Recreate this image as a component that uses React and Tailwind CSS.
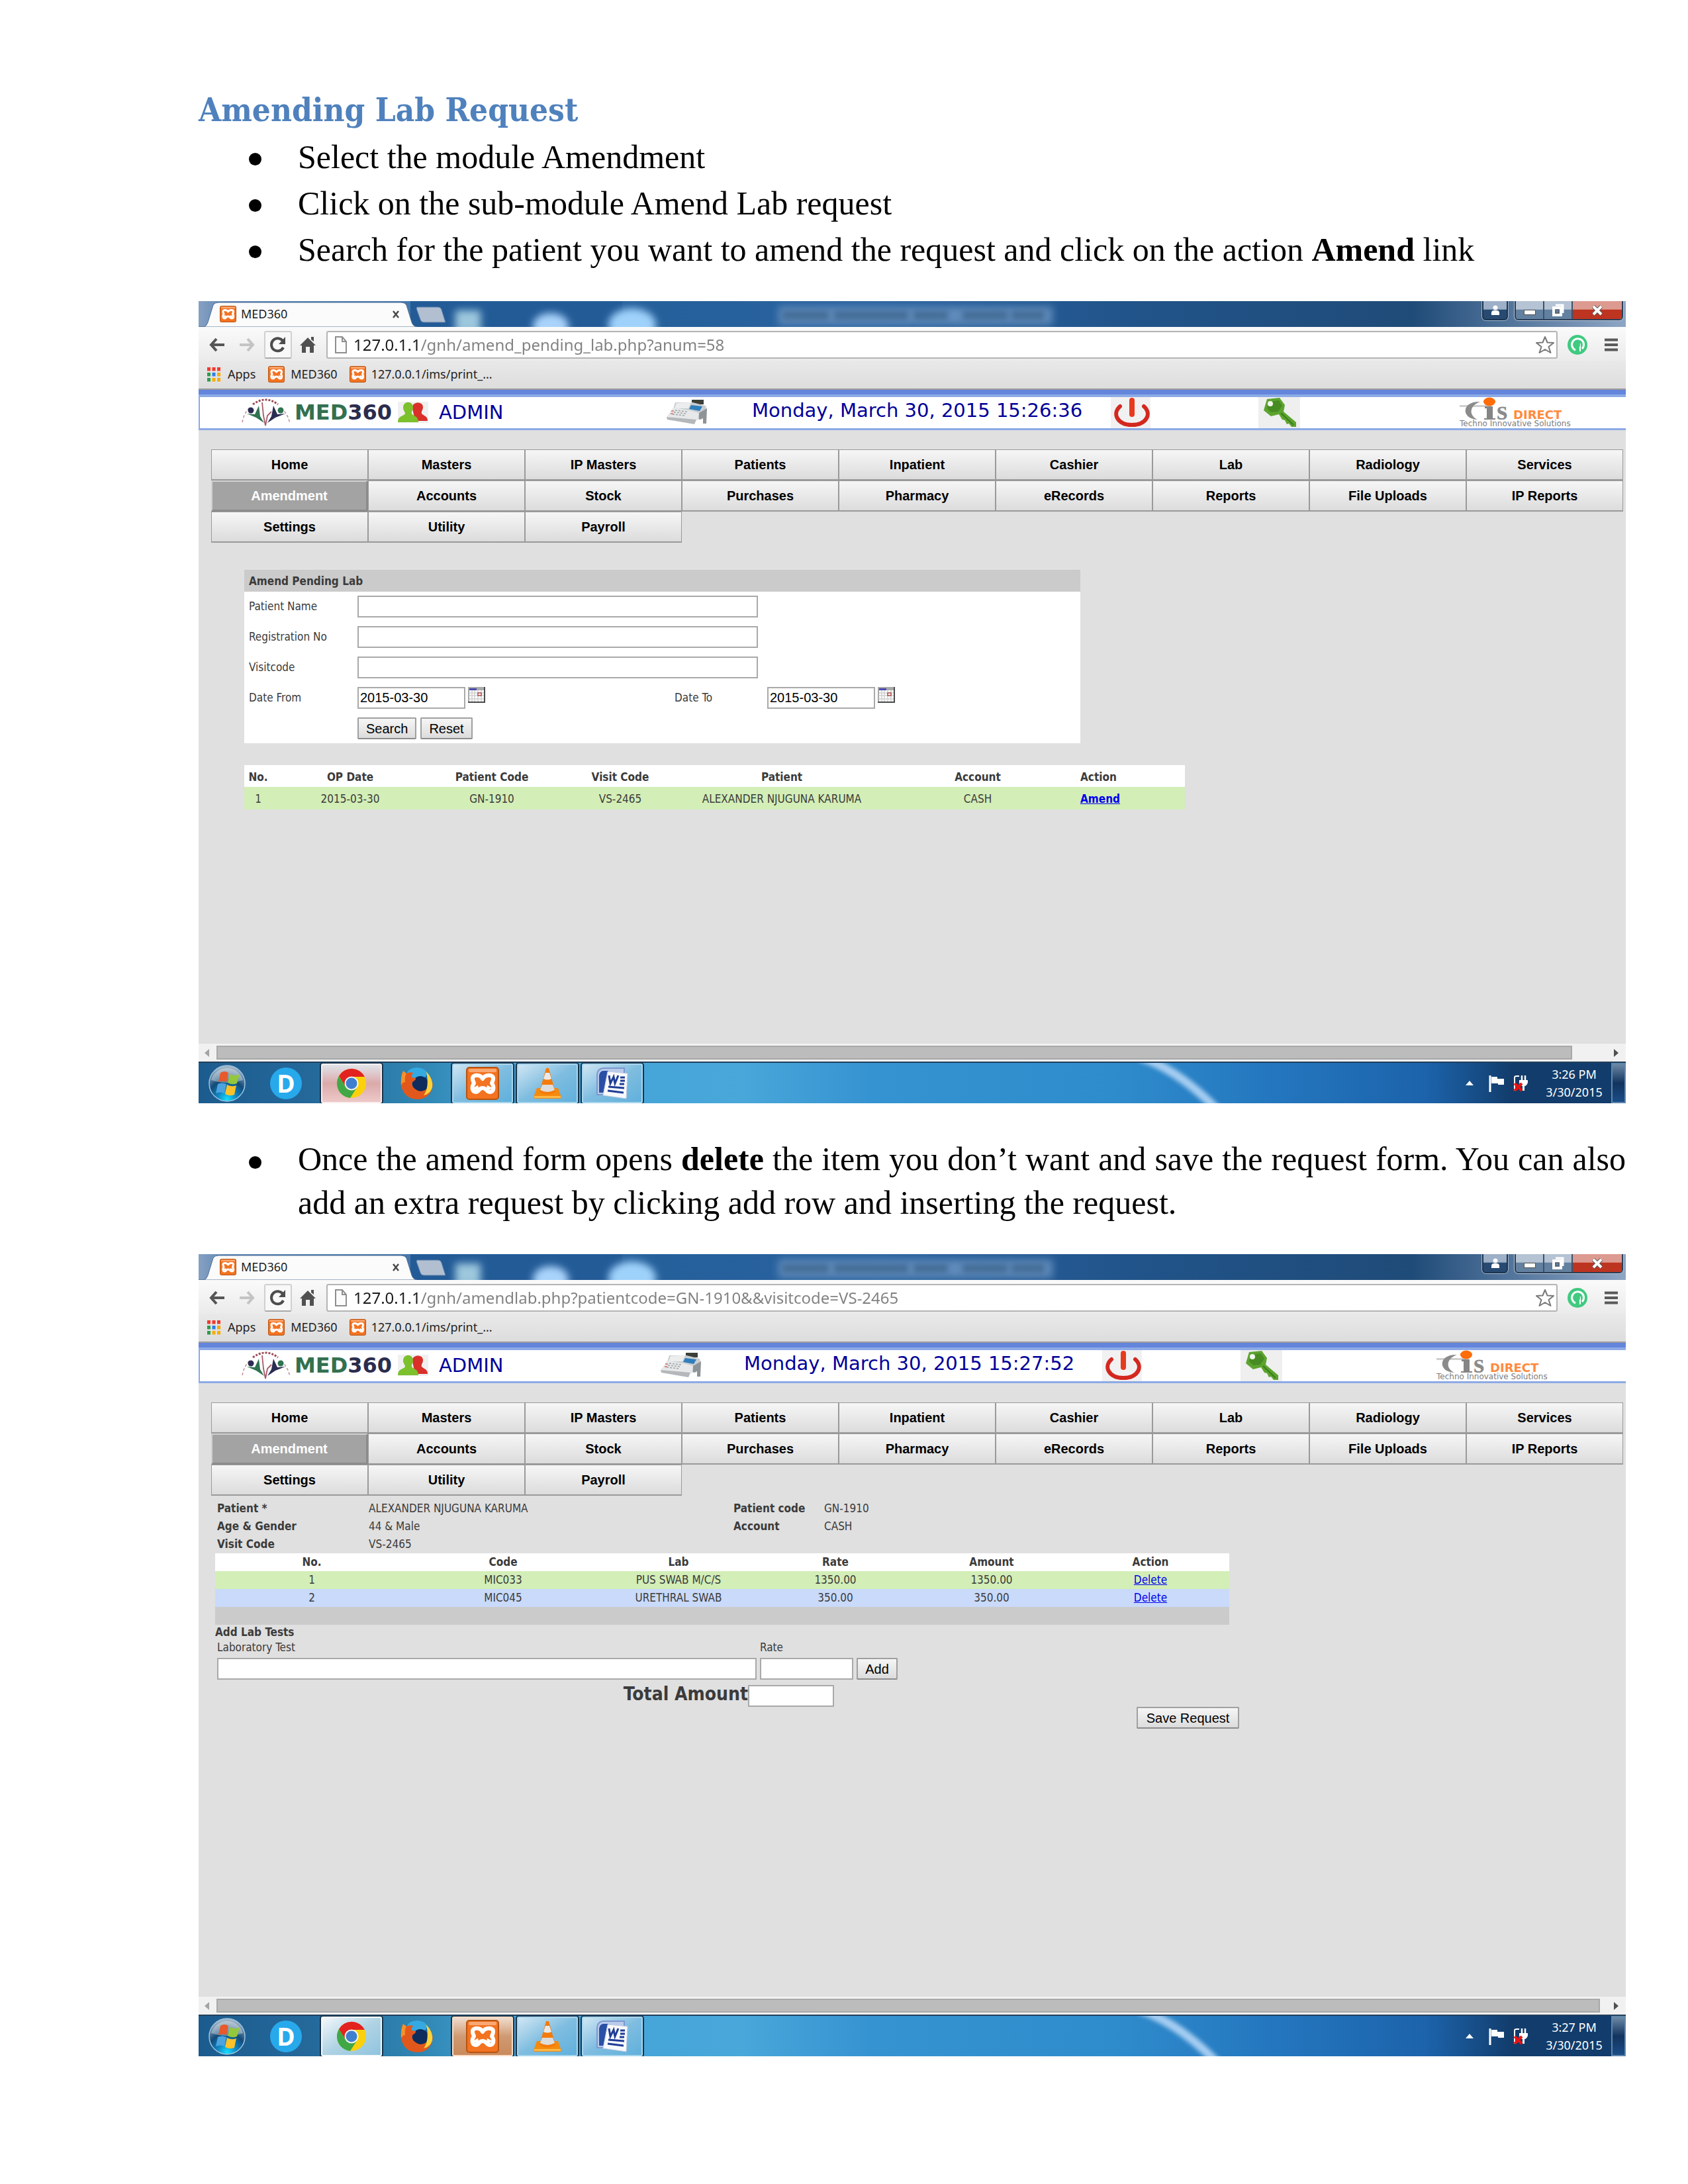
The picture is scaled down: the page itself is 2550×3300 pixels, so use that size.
import React from 'react';

const TAHOMA = "font-['DejaVu_Sans_Condensed','Noto_Sans',sans-serif]";
const SEGOE = "font-['Noto_Sans',sans-serif]";
const ARIAL = "font-['Liberation_Sans',Arial,sans-serif]";
const VERDANA = "font-['DejaVu_Sans',Verdana,sans-serif]";
const FIELD = 'border-2 border-[#a9a9a9] bg-white text-black text-[20px] px-[2px] h-[33px] rounded-none';
const BUTTON =
  'h-[33px] border-2 border-[#a0a0a0] border-b-[#8c8c8c] rounded-[2px] bg-linear-to-b from-[#f6f6f6] to-[#dcdcdc] text-black text-[20px] leading-none px-[11px]';

/* ---------- icons ---------- */

function XamppIcon({ className }) {
  return (
    <svg viewBox="0 0 50 50" className={className} aria-hidden="true">
      <rect x="1" y="1" width="48" height="48" rx="4" fill="#f37321" stroke="#b9530f" strokeWidth="2" />
      <rect x="4" y="3" width="42" height="5" rx="2" fill="#f9a873" />
      <path
        d="M25 18 C22 11 9 11 10 18 C10 22 12 23 12 25 C8 30 9 38 15 38 C20 38 19 32 25 32 C31 32 31 38 36 38 C42 38 43 30 39 25 C39 23 41 22 41 18 C42 11 29 11 25 18 Z"
        fill="none"
        stroke="#fff"
        strokeWidth="6"
        strokeLinejoin="round"
      />
      <path d="M13 32 L17 30 L18 35 Z M37 32 L33 30 L32 35 Z" fill="#fff" stroke="#fff" strokeWidth="3" />
    </svg>
  );
}

function AppsIcon() {
  const colors = ['#f03a2e', '#f03a2e', '#f03a2e', '#2c9c4b', '#2f7de9', '#f5ac08', '#2c9c4b', '#f5ac08', '#f5ac08'];
  return (
    <svg viewBox="0 0 20 22" className="h-[22px] w-[20px]" aria-hidden="true">
      {colors.map((c, i) => (
        <rect key={i} x={(i % 3) * 7.5} y={Math.floor(i / 3) * 8} width="5" height="5.5" fill={c} />
      ))}
    </svg>
  );
}

function MedMark() {
  return (
    <svg viewBox="0 0 74 42" className="h-[42px] w-[74px]" aria-hidden="true">
      <path d="M17 9 Q36 -5 55 9" fill="none" stroke="#9a4a54" strokeWidth="3" strokeDasharray="3 2" />
      <path d="M12 14 Q2 24 1 38 M60 14 Q70 24 73 38" fill="none" stroke="#c08a90" strokeWidth="1.5" strokeDasharray="4 3" />
      <circle cx="14" cy="18" r="4.5" fill="#2b2c52" />
      <circle cx="59" cy="18" r="4.5" fill="#2f7350" />
      <path d="M8 23 L20 24 L26 11 L28 27 L34 37 L22 29 Z" fill="#2f7350" />
      <path d="M66 23 L54 24 L48 11 L45 27 L39 37 L51 29 Z" fill="#2b2c52" />
      <path d="M31 6 L33 26 L36 41 L39 26 L45 20" fill="none" stroke="#a85a68" strokeWidth="1.8" />
    </svg>
  );
}

function PeopleIcon() {
  return (
    <svg viewBox="0 0 46 32" className="h-[32px] w-[46px]" aria-hidden="true">
      <rect width="46" height="32" fill="#f0f0f0" />
      <path d="M22 10 C20 0 38 -2 38 8 C38 13 35 14 36 18 C38 21 45 21 45 29 L26 29 Z" fill="#d9302a" />
      <path d="M8 9 C8 -2 23 -2 23 9 C23 13 20 15 21 18 C23 22 31 21 31 31 L0 31 C0 21 9 22 11 18 C11 15 8 13 8 9 Z" fill="#7cc02c" />
    </svg>
  );
}

function RegisterIcon() {
  return (
    <svg viewBox="0 0 64 38" className="h-[38px] w-[64px]" aria-hidden="true">
      <rect x="39" y="0" width="18" height="7" fill="#3b3f38" />
      <path d="M14 4 L40 4 L60 9 L62 16 L54 30 L8 24 Z" fill="#c9cdd0" />
      <path d="M16 5 L38 4 L34 13 L13 13 Z" fill="#eceeee" />
      <path d="M38 8 L55 10 L51 17 L35 14 Z" fill="#2f7fbd" />
      <path d="M11 12 L36 16 L50 20 L48 31 L1 26 Z" fill="#e6e8e9" />
      <path d="M1 26 L46 30 L43 37 L2 30 Z" fill="#b4b8ba" />
      <path d="M50 20 L62 13 L61 36 L56 36 L56 28 L50 30 Z" fill="#8d9397" />
      <path d="M14 16 L32 18 M12 19 L31 21 M10 22 L29 24" stroke="#9fa4a8" strokeWidth="1.5" strokeDasharray="3 2" />
      <path d="M8 17 L12 17 M7 21 L11 21" stroke="#d98b86" strokeWidth="2" />
    </svg>
  );
}

function PowerIcon() {
  return (
    <svg viewBox="0 0 60 47" className="h-[47px] w-[60px]" aria-hidden="true">
      <rect width="60" height="47" fill="#f1f1f1" />
      <path d="M14 14 C2 24 9 42 32 42 C55 42 62 24 50 14" fill="none" stroke="#d3281f" strokeWidth="6" strokeLinecap="round" />
      <path d="M32 5 V26" stroke="#e63b1f" strokeWidth="8" strokeLinecap="round" />
    </svg>
  );
}

function KeyIcon() {
  return (
    <svg viewBox="0 0 63 47" className="h-[47px] w-[63px]" aria-hidden="true">
      <rect width="63" height="47" fill="#efefef" />
      <path d="M13 3 L32 1 L40 12 L38 22 L57 38 L57 45 L50 45 L46 40 L43 41 L40 35 L36 34 L31 26 L19 29 L8 20 Z" fill="#5da42f" />
      <path d="M16 7 L31 5 L36 13 L30 22 L19 23 L13 17 Z" fill="#468c22" />
      <ellipse cx="18" cy="10" rx="4" ry="4" fill="#f2f7ee" />
      <path d="M34 24 L53 42" stroke="#3b7d1b" strokeWidth="2" />
    </svg>
  );
}

function CisLogo() {
  return (
    <svg viewBox="0 0 174 46" className="h-[46px] w-[174px] overflow-visible" role="img" aria-label="CIS Direct, Techno Innovative Solutions">
      <rect x="0" y="12" width="48" height="3" fill="#cfcfcf" />
      <path d="M31 7 C2 6 2 33 27 34 C14 28 14 13 31 7 Z" fill="#8b8b8b" />
      <path d="M38 14 H50 V32 H54 V34 H37 V32 H41 V17 H38 Z" fill="#858585" />
      <ellipse cx="45" cy="7" rx="9" ry="6.5" fill="#ff6d0a" />
      <text x="56" y="34" fontFamily="Liberation Serif, serif" fontWeight="700" fontSize="42" fill="#8b8b8b">s</text>
      <text x="81" y="33" fontFamily="DejaVu Sans, sans-serif" fontWeight="700" fontSize="18" fill="#ff8a3d">DIRECT</text>
      <text x="0" y="44" fontFamily="DejaVu Sans, sans-serif" fontSize="12" fill="#7d7d7d">Techno Innovative Solutions</text>
    </svg>
  );
}

function CalendarIcon() {
  return (
    <svg viewBox="0 0 26 24" className="h-[24px] w-[26px]" aria-hidden="true">
      <rect width="26" height="24" fill="#4a4a4a" />
      <rect width="24" height="22" fill="#a9a9a9" />
      <rect x="2" y="5" width="22" height="17" fill="#fff" />
      <rect x="2" y="2" width="11" height="3" fill="#4b4bb0" />
      <path d="M2 9 H24 M2 13 H24 M2 18 H24 M6 5 V22 M10 5 V22 M15 5 V22 M20 5 V22" stroke="#d0d0d0" strokeWidth="1.5" />
      <rect x="15" y="9" width="5" height="4" fill="#fff" stroke="#b04a4a" strokeWidth="1.5" />
    </svg>
  );
}

function StartOrb() {
  return (
    <svg viewBox="0 0 58 58" className="h-[58px] w-[58px]" aria-hidden="true">
      <defs>
        <radialGradient id="orb" cx="50%" cy="95%" r="90%">
          <stop offset="0" stopColor="#16e0ff" />
          <stop offset="0.3" stopColor="#1086c4" />
          <stop offset="0.6" stopColor="#134a78" />
          <stop offset="1" stopColor="#9fb4c6" />
        </radialGradient>
      </defs>
      <circle cx="29" cy="29" r="27" fill="url(#orb)" stroke="#9dc4dc" strokeWidth="1.5" />
      <path d="M5 24 A25 25 0 0 1 53 24 Q29 32 5 24 Z" fill="#fff" opacity="0.35" />
      <path d="M19 13 Q25 9 31 13 L28 27 Q22 24 16 27 Z" fill="#e8592b" />
      <path d="M33 15 Q40 19 48 15 L44 29 Q37 32 30 28 Z" fill="#93c83d" />
      <path d="M15 30 Q21 27 28 30 L25 44 Q19 41 12 44 Z" fill="#4ba4e0" />
      <path d="M29 31 Q36 35 43 32 L40 46 Q33 49 26 45 Z" fill="#fdc229" />
    </svg>
  );
}

function DIcon() {
  return (
    <span className="flex h-[48px] w-[48px] items-center justify-center rounded-full bg-[#27a9ec] text-[37px] font-bold leading-none text-white font-['Open_Sans',sans-serif]">
      D
    </span>
  );
}

function ChromeIcon() {
  return (
    <svg viewBox="0 0 46 46" className="h-[46px] w-[46px]" aria-hidden="true">
      <circle cx="23" cy="23" r="22" fill="#fbd10b" />
      <path d="M4 12 A22 22 0 0 1 43 13 L23 13 L14 28 Z" fill="#e2231f" />
      <path d="M4 12 A22 22 0 0 0 21 45 L32 28 L14 28 Z" fill="#3fa845" />
      <circle cx="23" cy="23" r="10.5" fill="#f3f5f2" />
      <circle cx="23" cy="23" r="8.5" fill="#3e7fd0" />
    </svg>
  );
}

function FirefoxIcon() {
  return (
    <svg viewBox="0 0 50 48" className="h-[48px] w-[50px]" aria-hidden="true">
      <circle cx="26" cy="20" r="19" fill="#1667b0" />
      <ellipse cx="25" cy="9" rx="15" ry="9" fill="#35a9e2" />
      <circle cx="30" cy="25" r="12" fill="#0e2c5c" />
      <path d="M4 5 L9 9 Q14 6 19 8 Q16 12 17 15 L23 16 Q24 19 18 22 Q16 29 23 33 Q30 39 39 33 Q44 26 40 9 Q51 20 48 31 Q43 48 25 48 Q5 47 1 27 Q0 14 4 5 Z" fill="#e2581c" />
      <path d="M39 6 Q50 18 48 30 Q45 40 35 42 Q44 30 39 6 Z" fill="#fbd33a" />
      <path d="M4 5 L9 9 Q6 14 7 22 Q3 22 1 27 Q0 14 4 5 Z" fill="#f4912b" />
    </svg>
  );
}

function VlcIcon() {
  return (
    <svg viewBox="0 0 44 48" className="h-[48px] w-[44px]" aria-hidden="true">
      <path d="M6 31 H38 L43 45 Q43 47 41 47 H3 Q1 47 1 45 Z" fill="#f58a0c" />
      <path d="M2 43 H42 V46 H2 Z" fill="#fdb94a" />
      <path d="M20 1 H24 L34 37 Q22 44 10 37 Z" fill="#f47b0a" />
      <path d="M19 8 H25 L28 17 Q22 20 16 17 Z" fill="#e9e9e9" />
      <path d="M14 26 H30 L33 34 Q22 40 11 34 Z" fill="#dcdcdc" />
    </svg>
  );
}

function WordIcon() {
  return (
    <svg viewBox="0 0 48 48" className="h-[48px] w-[48px]" aria-hidden="true">
      <path d="M10 1 H42 V41 H1 V10 Q2 2 10 1 Z" fill="#b9cbea" stroke="#7e97cf" strokeWidth="2" />
      <path d="M10 5 H18 V38 H4 V12 Q5 6 10 5 Z" fill="#2a4fa6" />
      <path d="M17 6 L47 9 L45 47 L10 42 Z" fill="#f8f9fc" stroke="#c3cde0" />
      <path d="M19 12 L21 24 L26 14 L28 24 L33 12" fill="none" stroke="#1f3d96" strokeWidth="3" />
      <path d="M36 15 H43 M36 20 H43 M35 25 H42 M18 29 L42 31 M17 35 L41 38" stroke="#1f3d96" strokeWidth="3" />
    </svg>
  );
}

/* ---------- browser chrome ---------- */

function TitleBar() {
  return (
    <div className="relative flex h-[39px] shrink-0 items-stretch overflow-hidden bg-[linear-gradient(to_right,#86a0c2_0%,#5f86b4_2%,#25609b_32%,#2a629f_48%,#21548a_65%,#1f4b78_85%,#7893b5_97%,#8ea6c4_100%)]">
      <svg viewBox="0 0 1300 39" className="absolute left-0 top-0 h-[39px] w-[1300px]" aria-hidden="true">
        <defs>
          <filter id="soft" x="-10%" y="-100%" width="120%" height="300%"><feGaussianBlur stdDeviation="6" /></filter>
          <filter id="softer" x="-10%" y="-100%" width="120%" height="300%"><feGaussianBlur stdDeviation="4" /></filter>
        </defs>
        <rect x="320" y="0" width="320" height="39" fill="#235b97" />
        <g filter="url(#soft)">
          <rect x="388" y="14" width="38" height="34" fill="#9cc7dd" />
          <ellipse cx="532" cy="38" rx="27" ry="20" fill="#a9d3fb" />
          <ellipse cx="655" cy="36" rx="36" ry="25" fill="#9fd2fb" />
          <rect x="876" y="8" width="414" height="28" fill="#5f8aba" />
        </g>
        <g filter="url(#softer)" fill="#33597f" opacity="0.6">
          <rect x="882" y="15" width="70" height="13" />
          <rect x="960" y="15" width="112" height="13" />
          <rect x="1080" y="15" width="52" height="13" />
          <rect x="1154" y="15" width="68" height="13" />
          <rect x="1228" y="15" width="50" height="13" />
        </g>
        <path d="M0 39 H8 Q12 38 14 32 L22 6 Q24 2 30 2 H306 Q312 2 314 6 L322 32 Q324 38 330 39 Z" fill="#fbfbfb" stroke="#4d6f97" strokeWidth="1" />
        <path d="M330 9 H362 Q366 9 367 13 L373 32 H340 Q336 32 335 28 L329 11 Z" fill="#b1bfd1" stroke="#5c80a8" />
      </svg>
      <div className={`relative ml-[32px] flex w-[280px] items-center gap-[7px] text-[18px] text-[#1d1d1d] ${SEGOE}`}>
        <XamppIcon className="h-[25px] w-[25px]" />
        <span>MED360</span>
        <button type="button" aria-label="Close tab" className="ml-auto mr-[8px] text-[#4a4a4a]">
          <svg viewBox="0 0 12 12" className="h-[12px] w-[12px]"><path d="M2 1 L10 11 M10 1 L2 11" stroke="currentColor" strokeWidth="2.5" /></svg>
        </button>
      </div>
      <div className="relative ml-auto mr-[4px] flex h-[29px] gap-[10px]">
        <button type="button" aria-label="User" className="flex w-[39px] items-center justify-center rounded-b-[6px] border-2 border-t-0 border-[#1c3550] bg-linear-to-b from-[#9db0c7] from-45% to-[#284a70] to-50% shadow-[0_0_0_1px_#9fb4cc]">
          <svg viewBox="0 0 14 16" className="h-[16px] w-[14px]"><circle cx="7" cy="4" r="3.5" fill="#fff" /><path d="M1 15 V12 Q1 8 5 8 H9 Q13 8 13 12 V15 Z" fill="#fff" /></svg>
        </button>
        <div className="flex overflow-hidden rounded-b-[6px] border-2 border-t-0 border-[#2a3f58] shadow-[0_0_0_1px_#b6c4d6]">
          <button type="button" aria-label="Minimize" className="flex w-[43px] items-end justify-center border-r-2 border-[#3b536f] bg-linear-to-b from-[#b5c3d4] from-45% to-[#62809f] to-50% pb-[6px]">
            <span className="h-[8px] w-[18px] border border-[#555] bg-white" />
          </button>
          <button type="button" aria-label="Restore" className="flex w-[43px] items-center justify-center border-r-2 border-[#3b536f] bg-linear-to-b from-[#b5c3d4] from-45% to-[#62809f] to-50%">
            <svg viewBox="0 0 20 20" className="h-[20px] w-[20px]" fill="none"><path d="M6 2 H17 V14" stroke="#fff" strokeWidth="3" /><rect x="3" y="6" width="11" height="11" stroke="#fff" strokeWidth="4" /><rect x="6" y="9" width="5" height="5" stroke="#555" /></svg>
          </button>
          <button type="button" aria-label="Close" className="flex w-[74px] items-center justify-center bg-linear-to-b from-[#dd9a90] from-45% to-[#bd3420] to-50%">
            <svg viewBox="0 0 18 16" className="h-[16px] w-[18px]"><path d="M3 2 L15 14 M15 2 L3 14" stroke="#555" strokeWidth="6" /><path d="M3 2 L15 14 M15 2 L3 14" stroke="#fff" strokeWidth="4" /></svg>
          </button>
        </div>
      </div>
    </div>
  );
}

function Toolbar({ url }) {
  return (
    <div className="flex h-[51px] shrink-0 items-center bg-linear-to-b from-[#fafafa] to-[#ebebeb] pl-[16px] pr-[12px] pt-[2px] text-[#4a4a4a]">
      <button type="button" aria-label="Back">
        <svg viewBox="0 0 24 22" className="h-[22px] w-[24px]"><path d="M11 2 L3 11 L11 20 M3 11 H23" fill="none" stroke="#555" strokeWidth="4" /></svg>
      </button>
      <button type="button" aria-label="Forward" className="ml-[21px]">
        <svg viewBox="0 0 24 22" className="h-[22px] w-[24px]"><path d="M13 2 L21 11 L13 20 M21 11 H1" fill="none" stroke="#c4c4c4" strokeWidth="4" /></svg>
      </button>
      <button type="button" aria-label="Reload" className="ml-[14px] flex h-[42px] w-[42px] items-center justify-center rounded-[3px] border-2 border-[#d0d0d0] border-b-[#a8a8a8] bg-[#f8f8f8]">
        <svg viewBox="0 0 26 26" className="h-[26px] w-[26px]"><path d="M21 17 A9.5 9.5 0 1 1 20 7" fill="none" stroke="#4d4d4d" strokeWidth="4" /><path d="M24 1 V12 H14 Z" fill="#4d4d4d" /></svg>
      </button>
      <button type="button" aria-label="Home" className="ml-[12px]">
        <svg viewBox="0 0 24 26" className="h-[26px] w-[24px]"><path d="M12 2 L24 14 H21 V25 H15 V16 H9 V25 H3 V14 H0 Z M17 1 H21 V8 L17 5 Z" fill="#505050" /></svg>
      </button>
      <div className="ml-[16px] flex h-[42px] min-w-0 flex-1 items-center rounded-[3px] border-2 border-[#b4b4b4] bg-white pl-[10px] pr-[2px]">
        <svg viewBox="0 0 20 26" className="h-[26px] w-[20px] shrink-0" aria-hidden="true"><path d="M2 1 H12 L18 8 V25 H2 Z M12 1 V8 H18" fill="#fbfbfb" stroke="#8e8e8e" strokeWidth="2" /></svg>
        <input
          aria-label="Address"
          defaultValue={url}
          className={`ml-[9px] h-[36px] min-w-0 flex-1 bg-[linear-gradient(to_right,#1a1a1a_98px,#808080_98px)] bg-clip-text text-[24px] text-transparent outline-none ${SEGOE}`}
        />
        <button type="button" aria-label="Bookmark this page">
          <svg viewBox="0 0 30 28" className="h-[28px] w-[30px]"><path d="M15 2 L18.500 10.500 L28 11 L20.500 17 L23.500 26 L15 21 L6.500 26 L9.500 17 L2 11 L11.500 10.500 Z" fill="#fff" stroke="#777" strokeWidth="2" strokeLinejoin="round" /></svg>
        </button>
      </div>
      <svg viewBox="0 0 30 30" className="ml-[15px] h-[30px] w-[30px]" aria-hidden="true">
        <circle cx="15" cy="15" r="15" fill="#3fca80" />
        <path d="M12 23 A9 9 0 1 1 22 21" fill="none" stroke="#fff" strokeWidth="3" />
        <path d="M19 13 V25" stroke="#fff" strokeWidth="2" />
        <circle cx="15" cy="15" r="4" fill="#3fca80" />
      </svg>
      <button type="button" aria-label="Menu" className="ml-[26px]">
        <svg viewBox="0 0 20 20" className="h-[20px] w-[20px]"><path d="M0 2.500 H20 M0 10 H20 M0 17.500 H20" stroke="#5a5a5a" strokeWidth="4" /></svg>
      </button>
    </div>
  );
}

function Bookmarks() {
  return (
    <div className={`flex h-[44px] shrink-0 items-center border-b-2 border-[#9c9c9c] bg-linear-to-b from-[#e9e9e9] to-[#dddddd] pb-[1px] pl-[13px] text-[18px] text-[#222] ${SEGOE}`}>
      <a href="#apps" className="flex items-center gap-[11px]"><AppsIcon />Apps</a>
      <a href="#med360" className="ml-[19px] flex items-center gap-[9px]"><XamppIcon className="h-[25px] w-[25px]" />MED360</a>
      <a href="#print" className="ml-[18px] flex items-center gap-[8px]"><XamppIcon className="h-[25px] w-[25px]" />127.0.0.1/ims/print_...</a>
    </div>
  );
}

/* ---------- application ---------- */

function AppHeader({ time, columns }) {
  return (
    <header className={`grid h-[61px] shrink-0 items-center border-t-[7px] border-[#6485dc] ${columns}`}>
      <div className="col-span-full row-start-1 h-full border-2 border-b-[3px] border-t-4 border-[#8caae6] border-r-0 bg-white" />
      <div className="col-start-2 row-start-1 flex items-center">
        <MedMark />
        <span className="ml-[6px] w-[156px] text-[32px] font-bold leading-none text-[#2b2c4d] font-['DejaVu_Sans',sans-serif]"><span className="text-[#33704f]">MED</span>360</span>
        <PeopleIcon />
        <span className={`ml-[16px] text-[29px] leading-none text-[#000099] ${VERDANA}`}>ADMIN</span>
      </div>
      <div className="col-start-3 row-start-1"><RegisterIcon /></div>
      <div className={`col-start-4 row-start-1 whitespace-nowrap pb-[6px] text-[29px] leading-none text-[#000099] ${VERDANA}`}>{time}</div>
      <a href="#logout" aria-label="Log out" className="col-start-5 row-start-1"><PowerIcon /></a>
      <a href="#password" aria-label="Change password" className="col-start-6 row-start-1"><KeyIcon /></a>
      <div className="col-start-7 row-start-1"><CisLogo /></div>
    </header>
  );
}

const MENU = [
  'Home', 'Masters', 'IP Masters', 'Patients', 'Inpatient', 'Cashier', 'Lab', 'Radiology', 'Services',
  'Amendment', 'Accounts', 'Stock', 'Purchases', 'Pharmacy', 'eRecords', 'Reports', 'File Uploads', 'IP Reports',
  'Settings', 'Utility', 'Payroll',
];

function MainMenu() {
  return (
    <nav className={`mt-[29px] ml-[19px] mr-[4px] grid grid-cols-9 text-center text-[20px] font-bold ${ARIAL}`}>
      {MENU.map((m) => (
        <a
          key={m}
          href={'#' + m}
          className={
            m === 'Amendment'
              ? 'h-[47px] border-2 border-r-[3px] border-b-[3px] border-[#8c8c8c] border-l-[#d0d0d0] border-t-[#d0d0d0] bg-[#a3a3a3] leading-[43px] text-white'
              : 'h-[47px] border border-b-2 border-[#9a9a9a] bg-linear-to-b from-[#f6f6f6] to-[#dcdcdc] leading-[45px] text-black'
          }
        >
          {m}
        </a>
      ))}
    </nav>
  );
}

function DateField({ id, label }) {
  return (
    <>
      <label htmlFor={id}>{label}</label>
      <div className="flex items-start gap-[4px]">
        <input id={id} defaultValue="2015-03-30" className={`w-[163px] ${FIELD} ${ARIAL}`} />
        <button type="button" aria-label={'Pick ' + label}><CalendarIcon /></button>
      </div>
    </>
  );
}

function PendingLab() {
  return (
    <main className={`ml-[69px] mt-[41px] text-[17px] text-[#3b3b3b] ${TAHOMA}`}>
      <form className="w-[1263px] bg-white" onSubmit={(e) => e.preventDefault()}>
        <h2 className="h-[33px] bg-[#cbcbcb] pl-[7px] font-bold leading-[35px]">Amend Pending Lab</h2>
        <div className="grid grid-cols-[164px_479px_140px_1fr] items-center gap-y-[13px] py-[6px] pl-[7px]">
          {['Patient Name', 'Registration No', 'Visitcode'].map((l) => (
            <React.Fragment key={l}>
              <label htmlFor={l}>{l}</label>
              <input id={l} className={`col-span-3 w-[605px] ${FIELD} ${ARIAL}`} />
            </React.Fragment>
          ))}
          <DateField id="date-from" label="Date From" />
          <DateField id="date-to" label="Date To" />
          <div className={`col-start-2 flex gap-[6px] ${ARIAL}`}>
            <button type="submit" className={BUTTON}>Search</button>
            <button type="reset" className={BUTTON}>Reset</button>
          </div>
        </div>
      </form>
      <table className="mt-[33px] w-[1421px] table-fixed text-center [&_td]:pt-[4px] [&_th]:pt-[4px]">
        <colgroup>
          <col className="w-[42px]" /><col className="w-[236px]" /><col className="w-[192px]" /><col className="w-[196px]" />
          <col className="w-[292px]" /><col className="w-[300px]" /><col />
        </colgroup>
        <thead>
          <tr className="h-[33px] bg-white">
            {['No.', 'OP Date', 'Patient Code', 'Visit Code', 'Patient', 'Account'].map((h) => <th key={h}>{h}</th>)}
            <th className="pl-[5px] text-left">Action</th>
          </tr>
        </thead>
        <tbody>
          <tr className="h-[34px] bg-[#d3eeb7]">
            {['1', '2015-03-30', 'GN-1910', 'VS-2465', 'ALEXANDER NJUGUNA KARUMA', 'CASH'].map((c) => <td key={c}>{c}</td>)}
            <td className="pl-[5px] text-left"><a href="#amend" className="font-bold text-[#0000ee] underline">Amend</a></td>
          </tr>
        </tbody>
      </table>
    </main>
  );
}

const TESTS = [
  ['1', 'MIC033', 'PUS SWAB M/C/S', '1350.00', '1350.00'],
  ['2', 'MIC045', 'URETHRAL SWAB', '350.00', '350.00'],
];

function AmendLab() {
  return (
    <main className={`ml-[25px] mt-[6px] text-[17px] text-[#3b3b3b] ${TAHOMA}`}>
      <dl className="grid grid-cols-[229px_551px_137px_1fr] pl-[3px] leading-[27px] [&>dt]:font-bold">
        <dt>Patient *</dt><dd>ALEXANDER NJUGUNA KARUMA</dd><dt>Patient code</dt><dd>GN-1910</dd>
        <dt>Age &amp; Gender</dt><dd>44 &amp; Male</dd><dt>Account</dt><dd>CASH</dd>
        <dt>Visit Code</dt><dd>VS-2465</dd>
      </dl>
      <table className="w-[1532px] table-fixed text-center leading-[27px]">
        <colgroup>
          <col className="w-[292px]" /><col className="w-[286px]" /><col className="w-[244px]" /><col className="w-[230px]" />
          <col className="w-[242px]" /><col />
        </colgroup>
        <thead>
          <tr className="bg-white">
            {['No.', 'Code', 'Lab', 'Rate', 'Amount', 'Action'].map((h) => <th key={h}>{h}</th>)}
          </tr>
        </thead>
        <tbody>
          {TESTS.map((r) => (
            <tr key={r[0]} className="odd:bg-[#d3eeb7] even:bg-[#c9dafa]">
              {r.map((c, i) => <td key={i}>{c}</td>)}
              <td><a href="#delete" className="text-[#0000ee] underline">Delete</a></td>
            </tr>
          ))}
        </tbody>
        <tfoot><tr className="h-[27px] bg-[#cbcbcb]"><td colSpan={6} /></tr></tfoot>
      </table>
      <form onSubmit={(e) => e.preventDefault()}>
        <h2 className="font-bold leading-[22px]">Add Lab Tests</h2>
        <div className="grid grid-cols-[820px_146px_1fr] pl-[3px] leading-[24px]">
          <label htmlFor="lab-test" className="pb-[4px]">Laboratory Test</label>
          <label htmlFor="lab-rate" className="col-span-2">Rate</label>
          <input id="lab-test" className={`w-[815px] ${FIELD}`} />
          <input id="lab-rate" className={`w-[141px] ${FIELD}`} />
          <button type="button" className={`w-[62px] ${BUTTON} ${ARIAL}`}>Add</button>
        </div>
        <div className="mt-[8px] flex w-[935px] items-start justify-end">
          <label htmlFor="total" className="text-[28px] font-bold leading-[28px]">Total Amount</label>
          <input id="total" className={`w-[130px] ${FIELD}`} />
        </div>
        <div className="flex w-[1547px] justify-end">
          <button type="submit" className={`w-[155px] whitespace-nowrap ${BUTTON} ${ARIAL}`}>Save Request</button>
        </div>
      </form>
    </main>
  );
}

/* ---------- desktop ---------- */

function ScrollBar({ gap }) {
  return (
    <div className="flex h-[27px] shrink-0 items-center bg-[#f1f1f1] pl-[9px] pr-[11px]">
      <svg viewBox="0 0 7 12" className="mr-[11px] h-[12px] w-[7px]" aria-hidden="true"><path d="M7 0 V12 L0 6 Z" fill="#a3a3a3" /></svg>
      <div className="h-[21px] flex-1 border-2 border-[#a8a8a8] bg-[#bcbcbc]" />
      <svg viewBox="0 0 7 12" className={`h-[12px] w-[7px] ${gap}`} aria-hidden="true"><path d="M0 0 V12 L7 6 Z" fill="#505050" /></svg>
    </div>
  );
}

const PLAIN = 'bg-linear-to-br from-[#cfe6f3] via-[#7fbde0] to-[#5fb0dc] border-[#a9d6ee]';
const PINK = 'bg-linear-to-b from-[#dfe4ea] via-[#dba9aa] to-[#edc9c8] border-[#fbeeee]';
const BRIGHT = 'bg-linear-to-br from-[#f3f8fb] via-[#b0d3e4] to-[#8fc4df] border-[#f6fbfd]';
const ORANGE = 'bg-linear-to-b from-[#efdccd] via-[#cf9a72] to-[#c98a5c] border-[#fbdcc6]';

function Task({ label, tone, children }) {
  return (
    <button type="button" aria-label={label} className={`flex h-[60px] w-[92px] items-center justify-center rounded-[3px] border-2 shadow-[0_0_0_2px_#16344c] ${tone}`}>
      {children}
    </button>
  );
}

function TaskBar({ clock, chrome, xampp }) {
  return (
    <div className="relative flex h-[63px] shrink-0 items-center overflow-hidden border-t-2 border-[#213f5b] bg-[linear-gradient(to_right,#1c5b8e_0%,#25699b_8%,#2f84b0_15%,#42a3d6_22%,#49a7da_38%,#3693d1_47%,#2f8ccc_64%,#2375bd_76%,#1c63ab_86%,#164a82_90%,#123c6b_92%,#123c6b_100%)] pl-[14px]">
      <svg viewBox="0 0 300 61" className="absolute left-[1380px] top-0 h-[61px] w-[300px]" aria-hidden="true">
        <defs><filter id="glow"><feGaussianBlur stdDeviation="3" /></filter></defs>
        <path d="M40 -10 Q100 10 160 72" fill="none" stroke="#a5cdf2" strokeWidth="13" filter="url(#glow)" />
      </svg>
      <button type="button" aria-label="Start"><StartOrb /></button>
      <button type="button" aria-label="D drive" className="ml-[36px]"><DIcon /></button>
      <div className="ml-[29px] flex items-center">
        <Task label="Chrome" tone={chrome}><ChromeIcon /></Task>
        <button type="button" aria-label="Firefox" className="mx-[28px]"><FirefoxIcon /></button>
        <div className="flex gap-[6px]">
          <Task label="XAMPP" tone={xampp}><XamppIcon className="h-[50px] w-[50px]" /></Task>
          <Task label="VLC" tone={PLAIN}><VlcIcon /></Task>
          <Task label="Word" tone={PLAIN}><WordIcon /></Task>
        </div>
      </div>
      <div className="ml-auto flex h-full items-center">
        <svg viewBox="0 0 12 7" className="h-[7px] w-[12px]" aria-hidden="true"><path d="M0 7 L6 0 L12 7 Z" fill="#fff" /></svg>
        <svg viewBox="0 0 24 26" className="ml-[23px] h-[26px] w-[24px]" aria-hidden="true"><path d="M2 1 V26" stroke="#fff" strokeWidth="3" /><path d="M4 3 H13 V6 H23 V15 H14 V13 H4 Z" fill="#fff" /></svg>
        <svg viewBox="0 0 24 26" className="ml-[13px] h-[26px] w-[24px]" aria-hidden="true">
          <path d="M2 24 V4 Q2 2 5 2 H9" fill="none" stroke="#fff" strokeWidth="2" />
          <path d="M13 1 V8 M18 1 V8" stroke="#fff" strokeWidth="2.500" />
          <path d="M9 8 H22 V12 Q20 17 17 17 V24 H14 V17 Q10 16 9 12 Z" fill="#fff" />
          <path d="M2 13 L13 24 M13 13 L2 24" stroke="#e81212" strokeWidth="4" />
        </svg>
        <div className={`ml-[16px] mr-[4px] w-[104px] text-center text-[18px] leading-[27px] text-white ${SEGOE}`}>
          <div>{clock}</div>
          <div>3/30/2015</div>
        </div>
        <div className="h-full w-[22px] border-2 border-[#5f87ac] bg-linear-to-b from-[#6d8aa6] via-[#12345e] to-[#1b4d88]" />
      </div>
    </div>
  );
}

function Screen({ url, time, columns, clock, gap, chrome, xampp, children }) {
  return (
    <section className="flex aspect-[2156/1212] w-full flex-col overflow-hidden bg-[#e0e0e0]">
      <TitleBar />
      <Toolbar url={url} />
      <Bookmarks />
      <AppHeader time={time} columns={columns} />
      <div className="min-h-0 flex-1">
        <MainMenu />
        {children}
      </div>
      <ScrollBar gap={gap} />
      <TaskBar clock={clock} chrome={chrome} xampp={xampp} />
    </section>
  );
}

function Step({ children }) {
  return (
    <li className="flex pl-[76px]">
      <span className="mr-[55px] mt-[29px] h-[19px] w-[19px] shrink-0 rounded-full bg-black" aria-hidden="true" />
      <p className="flex-1 text-justify">{children}</p>
    </li>
  );
}

export default function App() {
  return (
    <div className="min-h-screen bg-white pb-[193px] pl-[300px] pr-[94px] pt-[130px] font-['Liberation_Serif','Times_New_Roman',serif] text-[50px]">
      <h1 className="text-[49px] font-bold leading-[72px] text-[#4f81bd] font-['DejaVu_Serif_Condensed','DejaVu_Serif',serif]">Amending Lab Request</h1>
      <ul className="leading-[70px]">
        <Step>Select the module Amendment</Step>
        <Step>Click on the sub-module Amend Lab request</Step>
        <Step>Search for the patient you want to amend the request and click on the action <b>Amend</b> link</Step>
      </ul>
      <div className="mt-[43px]">
        <Screen
          url="127.0.1.1/gnh/amend_pending_lab.php?anum=58"
          time="Monday, March 30, 2015 15:26:36"
          columns="grid-cols-[65px_641px_130px_542px_223px_304px_1fr]"
          clock="3:26 PM"
          gap="ml-[63px]"
          chrome={PINK}
          xampp={PLAIN}
        >
          <PendingLab />
        </Screen>
      </div>
      <ul className="mt-[51px] leading-[66px]">
        <Step>
          Once the amend form opens <b>delete</b> the item you don’t want and save the request form. You can also add an extra request by clicking add row and inserting the request.
        </Step>
      </ul>
      <div className="mt-[45px]">
        <Screen
          url="127.0.1.1/gnh/amendlab.php?patientcode=GN-1910&&visitcode=VS-2465"
          time="Monday, March 30, 2015 15:27:52"
          columns="grid-cols-[65px_632px_127px_541px_209px_296px_1fr]"
          clock="3:27 PM"
          gap="ml-[21px]"
          chrome={BRIGHT}
          xampp={ORANGE}
        >
          <AmendLab />
        </Screen>
      </div>
    </div>
  );
}
